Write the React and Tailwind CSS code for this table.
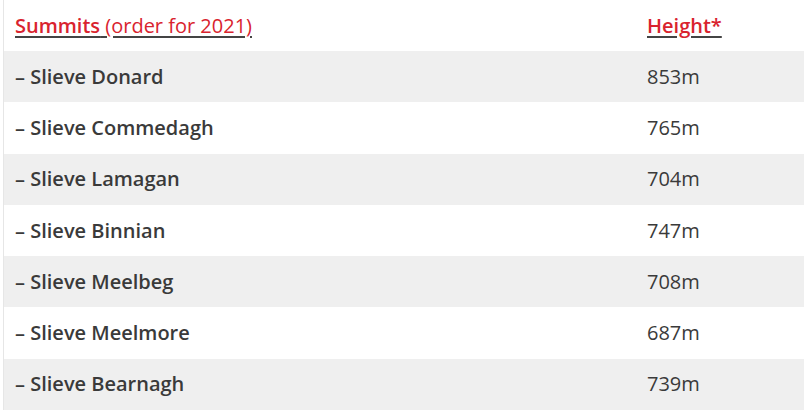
import React from 'react';

const summits = [
    ['Slieve Donard', '853m'],
    ['Slieve Commedagh', '765m'],
    ['Slieve Lamagan', '704m'],
    ['Slieve Binnian', '747m'],
    ['Slieve Meelbeg', '708m'],
    ['Slieve Meelmore', '687m'],
    ['Slieve Bearnagh', '739m'],
];

export default function App() {
    return (
        <div className="w-[804px] h-[411px] bg-white overflow-hidden pl-[3px]"
            style={{ fontFamily: '"Open Sans", "Liberation Sans", sans-serif' }}>
            <div className="border-l border-[#e6e6e6] text-[20px] text-[#3a3a3a]">
                {/* header */}
                <div className="flex h-[51px] items-center">
                    <div className="w-[632px] pl-[11px] text-[#d9232e] underline decoration-[#444] underline-offset-[3px]">
                        <span className="font-semibold">Summits</span> (order for 2021)
                    </div>
                    <div className="pl-[11px] font-semibold text-[#d9232e] underline decoration-[#444] underline-offset-[3px]">
                        Height*
                    </div>
                </div>

                {summits.map(([name, h], i) => (
                    <div key={name}
                        className={`flex h-[51.3px] items-center ${i % 2 === 0 ? 'bg-[#efefef]' : 'bg-white'}`}>
                        <div className="w-[632px] pl-[11px] font-semibold">– {name}</div>
                        <div className="pl-[11px]">{h}</div>
                    </div>
                ))}
            </div>
        </div>
    );
}
